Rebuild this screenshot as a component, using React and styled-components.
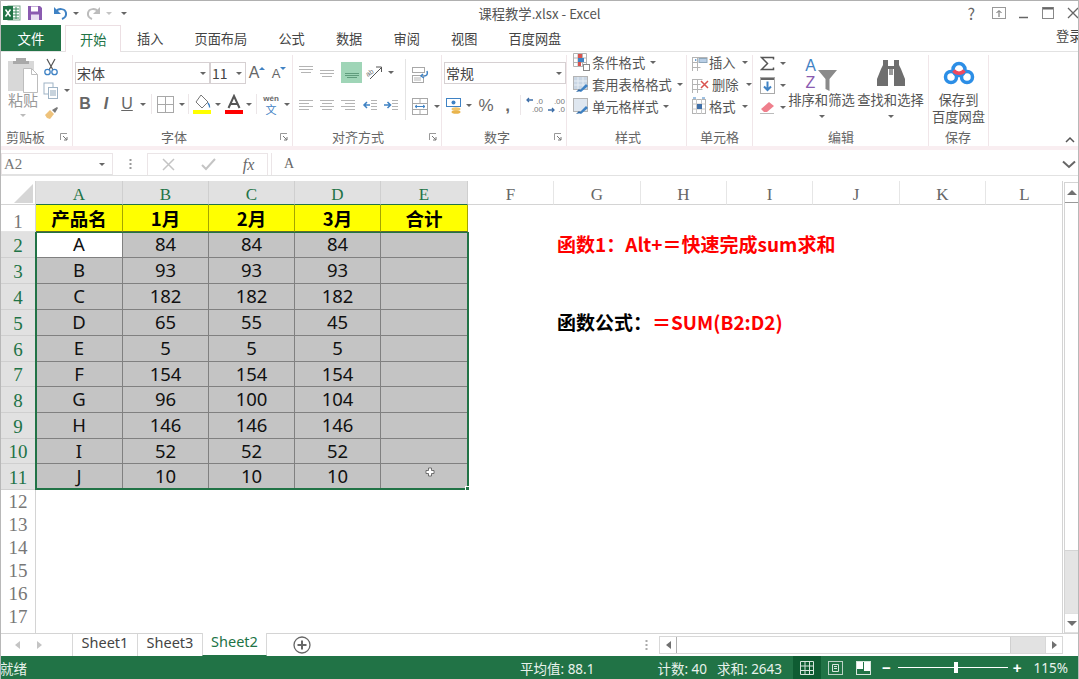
import React from 'react'
import styled, { createGlobalStyle } from 'styled-components'

const GlobalStyle = createGlobalStyle`
  html, body {
    margin: 0;
    padding: 0;
    background: #fff;
    overflow: hidden;
  }
  * { box-sizing: border-box; }
`

const UI_FONT = `"Noto Sans CJK SC", "Noto Sans", sans-serif`
const SERIF = `"Liberation Serif", "Noto Sans CJK SC", serif`
const COLS = '35px 87px 86px 86px 86px 87px 86px 87px 86px 86px 87px 86px 77px'
const GREEN = '#217346'

const Icon = ({ w, h, children }) => (
  <svg width={w} height={h} viewBox={`0 0 ${w} ${h}`} fill="none">{children}</svg>
)

// horizontal text-alignment style icons
const Lines = ({ rows, color = '#b4b4b4' }) => (
  <Icon w={16} h={16}>
    {rows.map(([x1, x2, y], i) => (
      <line key={i} x1={x1} x2={x2} y1={y + 0.5} y2={y + 0.5} stroke={color} />
    ))}
  </Icon>
)

const ExcelLogo = () => (
  <Icon w={19} h={18}>
    <rect x="6" y="2" width="12" height="14" fill="#fff" stroke="#7aa98d" />
    <path d="M11 5h6M11 8h6M11 11h6M11 14h6M14 3v12" stroke="#3b8b5f" />
    <rect x="1" y="2" width="10" height="14" fill={GREEN} />
    <path d="M3.500 5.500l5 7M8.500 5.500l-5 7" stroke="#fff" strokeWidth="1.500" />
  </Icon>
)

const SaveIcon = () => (
  <Icon w={16} h={16}>
    <path d="M1 1h12l2 2v12H1z" fill="#8a5bb0" />
    <rect x="4" y="1.500" width="7" height="5" fill="#fff" />
    <rect x="4" y="9.500" width="8" height="5.500" fill="#e9dff2" />
  </Icon>
)

const UndoIcon = ({ color }) => (
  <Icon w={15} h={16}>
    <path d="M3 7c2-4 9-4 10 1 .5 3-1.500 5-4 6" stroke={color} strokeWidth="2" />
    <path d="M1 2v7h7z" fill={color} />
  </Icon>
)

const RedoIcon = ({ color }) => (
  <Icon w={15} h={16}>
    <path d="M12 7C10 3 3 3 2 8c-.5 3 1.500 5 4 6" stroke={color} strokeWidth="2" />
    <path d="M14 2v7H7z" fill={color} />
  </Icon>
)

const PasteIcon = () => (
  <Icon w={33} h={36}>
    <rect x="1" y="4" width="26" height="30" fill="#d8d8d8" />
    <path d="M9 4V1h10v3h3v3H6V4z" fill="#a9a9a9" />
    <path d="M16.500 11.500h8l6 6v18h-14z" fill="#fff" stroke="#bdbdbd" />
    <path d="M24.500 11.500v6h6" stroke="#bdbdbd" />
  </Icon>
)

const ScissorsIcon = () => (
  <Icon w={16} h={18}>
    <path d="M4 1l6 11M12 1L6 12" stroke="#555" strokeWidth="1.200" />
    <circle cx="4.500" cy="14" r="2.700" stroke="#3f82c4" strokeWidth="1.300" />
    <circle cx="11.500" cy="14" r="2.700" stroke="#3f82c4" strokeWidth="1.300" />
  </Icon>
)

const CopyIcon = () => (
  <Icon w={16} h={17}>
    <rect x="1" y="1" width="9" height="11" fill="#fff" stroke="#9fb4c6" />
    <rect x="5.500" y="5.500" width="9" height="11" fill="#fff" stroke="#9fb4c6" />
    <path d="M7 9h6M7 11h6M7 13h6" stroke="#8fa7bb" />
  </Icon>
)

const BrushIcon = () => (
  <Icon w={15} h={14}>
    <path d="M1 9l5-5 4 4-4 5-3-1z" fill="#eec27b" />
    <path d="M8 4l5-3 1 1-3 5z" fill="#7a7a7a" />
  </Icon>
)

const BorderIcon = () => (
  <Icon w={17} h={17}>
    <rect x="0.500" y="0.500" width="16" height="16" stroke="#a8a8a8" />
    <path d="M8.500 1v15M1 8.500h15" stroke="#a8a8a8" />
  </Icon>
)

const FillIcon = () => (
  <Icon w={18} h={20}>
    <path d="M8 1l7 7-6 6-6-6z" fill="#fff" stroke="#777" />
    <path d="M15 9c1.500 2 2 3 1.500 4.500" stroke="#3f82c4" strokeWidth="1.500" />
    <rect x="0" y="16" width="18" height="4" fill="#ffff00" />
  </Icon>
)

const FontColorIcon = () => (
  <Icon w={18} h={20}>
    <path d="M3.500 14L9 2l5.500 12M5.500 10h7" stroke="#555" strokeWidth="2" />
    <rect x="0" y="16" width="18" height="4" fill="#ff0000" />
  </Icon>
)

const OrientIcon = () => (
  <Icon w={18} h={16}>
    <text x="1" y="11" fontSize="7" fill="#666" fontFamily="Liberation Sans" transform="rotate(-35 5 9)">ab</text>
    <path d="M5 15L16 4M11 3h5.500v5" stroke="#555" />
  </Icon>
)

const IndentIcon = ({ right }) => (
  <Icon w={16} h={12}>
    <path d="M9 1.500h6M9 4.500h6M9 7.500h6M9 10.500h6" stroke="#b4b4b4" />
    {right
      ? <path d="M1 6h6M4.500 3l3 3-3 3" stroke="#3f82c4" strokeWidth="1.500" />
      : <path d="M8 6H2M5 3L2 6l3 3" stroke="#3f82c4" strokeWidth="1.500" />}
  </Icon>
)

const WrapIcon = () => (
  <Icon w={17} h={16}>
    <rect x="0.500" y="0.500" width="12" height="5" stroke="#a8a8a8" />
    <rect x="0.500" y="8.500" width="11" height="7" stroke="#a8a8a8" />
    <path d="M2 11h7M2 13h7" stroke="#b4b4b4" />
    <path d="M15 4c1 3 0 5-3 5M11 7L9 9l3 2" stroke="#3f82c4" strokeWidth="1.500" />
  </Icon>
)

const MergeIcon = () => (
  <Icon w={16} h={17}>
    <rect x="0.500" y="0.500" width="15" height="16" stroke="#a8a8a8" />
    <path d="M1 5.500h14M1 11.500h14M8 1v4M8 12v4" stroke="#a8a8a8" />
    <path d="M3 8.500h10M5 7L3 8.500 5 10M11 7l2 1.500L11 10" stroke="#3f82c4" />
  </Icon>
)

const MoneyIcon = () => (
  <Icon w={17} h={17}>
    <rect x="0.500" y="1.500" width="14" height="8" fill="#fff" stroke="#3f82c4" />
    <circle cx="7.500" cy="5.500" r="2" fill="#3f82c4" />
    <ellipse cx="10" cy="12" rx="4.500" ry="1.800" fill="#f2c66d" />
    <ellipse cx="10" cy="15" rx="4.500" ry="1.800" fill="#e9b44c" />
  </Icon>
)

const DecimalIcon = ({ top, bottom, up }) => (
  <Icon w={20} h={18}>
    <text x="19" y="8" textAnchor="end" fontSize="8" fill="#777" fontFamily="Liberation Sans">{top}</text>
    <text x="19" y="16" textAnchor="end" fontSize="8" fill="#777" fontFamily="Liberation Sans">{bottom}</text>
    {up
      ? <path d="M9 4H3M5 2L3 4l2 2" stroke="#3f6fa8" strokeWidth="1.300" />
      : <path d="M2 14h6M6 12l2 2-2 2" stroke="#3f6fa8" strokeWidth="1.300" />}
  </Icon>
)

const CondIcon = () => (
  <Icon w={17} h={18}>
    <path d="M.5.500h13v13H.5zM5 1v12M9.500 1v12M1 5h12M1 9.500h12" stroke="#b4b4b4" />
    <rect x="5" y="1" width="4" height="4" fill="#d9534f" />
    <rect x="5" y="5" width="6" height="4" fill="#3f82c4" />
    <rect x="5" y="9" width="3" height="4" fill="#d9534f" />
    <rect x="10.500" y="11.500" width="6" height="6" fill="#fff" stroke="#888" />
  </Icon>
)

const TableStyleIcon = ({ plain }) => (
  <Icon w={17} h={17}>
    <rect x="0.500" y="0.500" width="14" height="13" fill={plain ? '#dfe7f0' : '#c9d6e4'} stroke="#b4b4b4" />
    {!plain && <path d="M5 1v12M10 1v12M1 5h13M1 9h13" stroke="#e8eef4" />}
    <path d="M6 15l7-7 2 2-7 6z" fill="#3f82c4" />
    <path d="M3 16l3-3 2 2z" fill="#2f6aa8" />
  </Icon>
)

const CellInsertIcon = () => (
  <Icon w={16} h={17}>
    <path d="M.5 3.500h15M.5 8.500h5M.5 13.500h8M5.500 3v14M.5 3v14" stroke="#b4b4b4" />
    <rect x="7" y="4.500" width="8" height="4" fill="#b9cfe6" stroke="#8fa7bb" />
    <path d="M3 5v2l2-1z" fill="#3f82c4" />
  </Icon>
)

const CellDeleteIcon = () => (
  <Icon w={18} h={17}>
    <path d="M.5 3.500h10M.5 8.500h8M.5 13.500h10M5.500 3v14M.5 3v14" stroke="#b4b4b4" />
    <path d="M9 5l7 7M16 5l-7 7" stroke="#d9534f" strokeWidth="1.500" />
  </Icon>
)

const CellFormatIcon = () => (
  <Icon w={16} h={18}>
    <rect x="0.500" y="2.500" width="13" height="14" stroke="#b4b4b4" />
    <path d="M.5 7h13M.5 12h13M4.500 2v15M9.500 2v15" stroke="#c8c8c8" />
    <rect x="5" y="7" width="5" height="5" fill="#3f6fa8" />
    <path d="M1 1h3M10 1h3" stroke="#3f82c4" />
  </Icon>
)

const SigmaIcon = () => (
  <Icon w={15} h={15}>
    <path d="M13.500 3.500V1.500h-12l6 6-6 6h12v-2" stroke="#555" strokeWidth="1.500" />
  </Icon>
)

const FillDownIcon = () => (
  <Icon w={15} h={17}>
    <rect x="0.500" y="0.500" width="14" height="16" fill="#fff" stroke="#aaa" />
    <rect x="1" y="1" width="13" height="2" fill="#666" />
    <path d="M7.500 4.500v8M4 9.500l3.500 3.500L11 9.500" stroke="#3f82c4" strokeWidth="2" />
  </Icon>
)

const EraserIcon = () => (
  <Icon w={15} h={14}>
    <path d="M1 9l8-7 5 4-7 6H4z" fill="#ef7f8c" />
    <path d="M0 13.500h14" stroke="#bbb" />
  </Icon>
)

const FunnelIcon = () => (
  <Icon w={20} h={22}>
    <path d="M0 1h19l-7.500 9v12l-4-2V10z" fill="#8a8a8a" />
  </Icon>
)

const FindIcon = () => (
  <Icon w={30} h={28}>
    <path d="M7 1h5v6h6V1h5v5l2 4 4 10v7H18V10h-6v17H1v-7l4-10 2-4z" fill="#6e6e6e" />
    <path d="M13 10h4v6h-4z" fill="#9a9a9a" />
  </Icon>
)

const CloudIcon = () => (
  <Icon w={32} h={24}>
    <circle cx="16" cy="8.500" r="6" stroke="#2c8ee6" strokeWidth="3.500" />
    <circle cx="8" cy="16" r="5.500" stroke="#2c8ee6" strokeWidth="3.500" />
    <circle cx="24" cy="16" r="5.500" stroke="#2c8ee6" strokeWidth="3.500" />
    <path d="M10.500 9.500c3 3.500 8 3.500 11 0" stroke="#ef4a5f" strokeWidth="3.500" />
  </Icon>
)

const Launcher = () => (
  <Icon w={8} h={8}>
    <path d="M.5 7V.5H7" stroke="#999" />
    <path d="M3 3l4 4M7 4v3H4" stroke="#777" />
  </Icon>
)

const CursorIcon = () => (
  <Icon w={10} h={10}>
    <path d="M3.500 1h3v2.500H9v3H6.500V9h-3V6.500H1v-3h2.500z" fill="#fff" stroke="#555" strokeWidth=".8" />
  </Icon>
)

const Caret = styled.span`
  display: inline-block;
  flex: none;
  width: 0;
  height: 0;
  margin: ${(p) => p.$margin || '0'};
  border-left: 3px solid transparent;
  border-right: 3px solid transparent;
  border-top: 3px solid ${(p) => p.$color || '#666'};
`

const Window = styled.div`
  width: 1079px;
  height: 679px;
  display: flex;
  flex-direction: column;
  background: #fff;
  color: #444;
  font-family: ${UI_FONT};
  overflow: hidden;
  border-left: 1px solid #b8b8b8;
  border-right: 1px solid #b8b8b8;
`

const TitleBar = styled.div`
  height: 25px;
  flex: none;
  display: grid;
  grid-template-columns: 1fr auto 1fr;
  align-items: center;
  border-top: 1px solid #b0b0b0;
`

const Qat = styled.div`
  display: flex;
  align-items: center;
  padding-left: 1px;
`

const QatSlot = styled.span`
  display: flex;
  align-items: center;
  margin-left: ${(p) => p.$ml || 0}px;
`

const Title = styled.div`
  font-size: 13.300px;
  color: #555;
`

const WinButtons = styled.div`
  display: flex;
  justify-content: flex-end;
  align-items: center;
  gap: 12px;
  color: #666;
`

const Help = styled.span`
  font-size: 16px;
  margin-right: 5px;
`

const TabsBar = styled.div`
  height: 27px;
  flex: none;
  display: flex;
  align-items: stretch;
  border-bottom: 1px solid #e2e2e2;
  font-size: 13.200px;
`

const FileTab = styled.div`
  width: 60px;
  margin-right: 4px;
  background: ${GREEN};
  color: #fff;
  display: flex;
  align-items: center;
  justify-content: center;
  font-size: 13.500px;
`

const Tab = styled.div`
  padding: 0 15.580px;
  display: flex;
  align-items: center;
  color: ${(p) => (p.$active ? GREEN : '#444')};
  background: #fff;
  ${(p) => p.$active && `
    border: 1px solid #ecdfe3;
    border-bottom: none;
    margin-bottom: -1px;
    padding: 0 14px;
  `}
`

const Login = styled.div`
  margin-left: auto;
  margin-right: -8px;
  padding-bottom: 6px;
  display: flex;
  align-items: center;
  width: 30px;
  white-space: nowrap;
  overflow: hidden;
`

const Ribbon = styled.div`
  height: 94px;
  flex: none;
  display: flex;
  font-size: 13.300px;
  color: #555;
  position: relative;
`

const RibbonBand = styled.div`
  height: 4px;
  flex: none;
  background: #f9eef1;
`

const Group = styled.div`
  width: ${(p) => p.$w}px;
  flex: none;
  margin-top: 3px;
  display: flex;
  flex-direction: column;
  border-right: 1px solid #f0e6e9;
`

const GroupBody = styled.div`
  flex: 1;
  min-height: 0;
  display: flex;
  padding-left: ${(p) => p.$pl || 0}px;
`

const GroupFoot = styled.div`
  height: 19px;
  flex: none;
  display: grid;
  grid-template-columns: ${(p) => p.$left}px auto 1fr;
  align-items: center;
  color: #666;
  font-size: 13px;
  line-height: 1;
  padding-right: 4px;
`

const LauncherSlot = styled.span`
  grid-column: 3;
  justify-self: end;
  display: flex;
`

const Stack = styled.div`
  display: flex;
  flex-direction: column;
  width: ${(p) => (p.$w ? `${p.$w}px` : 'auto')};
  flex: none;
  margin-top: ${(p) => p.$mt || 0}px;
  gap: ${(p) => p.$gap || 0}px;
  align-items: ${(p) => p.$align || 'stretch'};
`

const Row = styled.div`
  display: flex;
  align-items: center;
  height: ${(p) => p.$h || 22}px;
  margin-top: ${(p) => p.$mt || 0}px;
`

const Tool = styled.span`
  width: ${(p) => p.$w || 21}px;
  height: 100%;
  flex: none;
  display: flex;
  align-items: center;
  justify-content: center;
  margin-left: ${(p) => p.$ml || 0}px;
`

const Sep = styled.span`
  width: 1px;
  height: 20px;
  flex: none;
  background: #ece6e8;
  margin: 0 ${(p) => p.$m || 2}px;
`

const Glyph = styled.span`
  font-family: "Liberation Sans", sans-serif;
  font-size: ${(p) => p.$size || 16}px;
  font-weight: ${(p) => (p.$bold ? 700 : 400)};
  font-style: ${(p) => (p.$italic ? 'italic' : 'normal')};
  text-decoration: ${(p) => (p.$under ? 'underline' : 'none')};
  line-height: 1;
  color: #666;
`

const GrowMark = styled.span`
  display: flex;
  margin: 0 0 10px 0;
  width: 0;
  height: 0;
  border-left: 3px solid transparent;
  border-right: 3px solid transparent;
  ${(p) => (p.$up ? 'border-bottom' : 'border-top')}: 3px solid #3f82c4;
`

const WenStack = styled.span`
  display: flex;
  flex-direction: column;
  align-items: center;
`

const WenTop = styled.span`
  font-family: "Liberation Sans", sans-serif;
  font-size: 8px;
  font-weight: 700;
  line-height: 9px;
  color: #666;
`

const WenBottom = styled.span`
  font-size: 11px;
  line-height: 12px;
  color: #3f82c4;
`

const SortLetters = styled.span`
  display: flex;
  flex-direction: column;
  align-items: center;
  font-family: "Liberation Sans", sans-serif;
  font-size: 16px;
  line-height: 17px;
  margin-right: 2px;
`

const SortLetter = styled.span`
  color: ${(p) => p.$color};
`

const SelectBox = styled.div`
  width: ${(p) => p.$w}px;
  height: 100%;
  flex: none;
  border: 1px solid #d6d0d2;
  display: flex;
  align-items: center;
  justify-content: space-between;
  padding: 0 3px 0 1px;
  font-size: 14px;
  color: #444;
  background: #fff;
`

const GreenBox = styled.span`
  width: 21px;
  height: 21px;
  flex: none;
  display: flex;
  align-items: center;
  justify-content: center;
  margin-left: 4px;
  background: #9fd5b7;
`

const VDivider = styled.span`
  width: 1px;
  height: 61px;
  flex: none;
  background: #e4e4e4;
  margin-top: 4px;
`

const TextRow = styled.div`
  display: flex;
  align-items: center;
  height: 22px;
  white-space: nowrap;
  gap: ${(p) => p.$gap || 2}px;
`

const BigButton = styled.div`
  width: ${(p) => p.$w}px;
  flex: none;
  display: flex;
  flex-direction: column;
  align-items: center;
  line-height: 17px;
  white-space: nowrap;
`

const IconSlot = styled.div`
  height: 36px;
  display: flex;
  align-items: ${(p) => p.$align || 'flex-start'};
  justify-content: center;
`

const PasteLabel = styled.div`
  color: #999;
  font-size: 15px;
  line-height: 20px;
  margin-top: -3px;
`

const RibbonCollapse = styled.div`
  position: absolute;
  right: 3px;
  bottom: 3px;
  display: flex;
`

const FormulaBar = styled.div`
  height: 26px;
  flex: none;
  display: flex;
  align-items: stretch;
  padding-top: 3px;
  border-bottom: 1px solid #e2e2e2;
  margin-bottom: 5px;
  font-family: ${SERIF};
`

const NameBox = styled.div`
  width: 112px;
  flex: none;
  border: 1px solid #ebe5e7;
  border-bottom-color: #e2e2e2;
  display: flex;
  align-items: center;
  justify-content: space-between;
  padding: 0 7px 0 2px;
  color: #777;
  font-size: 15px;
`

const Grip = styled.div`
  width: 34px;
  flex: none;
  display: flex;
  align-items: center;
  justify-content: center;
`

const FxBox = styled.div`
  width: 121px;
  flex: none;
  border: 1px solid #ebe5e7;
  border-bottom: none;
  display: grid;
  grid-template-columns: 40px 41px 39px;
  align-items: center;
  justify-items: center;
  color: #666;
  font-size: 16px;
  font-style: italic;
`

const FormulaInput = styled.div`
  flex: 1;
  margin-left: 3px;
  border-left: 1px solid #ebe5e7;
  display: flex;
  align-items: center;
  justify-content: space-between;
  padding: 0 2px 0 12px;
  color: #666;
  font-size: 14px;
`

const Main = styled.div`
  flex: 1;
  min-height: 0;
  display: flex;
`

const Sheet = styled.div`
  width: 1062px;
  flex: none;
  position: relative;
  overflow: hidden;
  border-right: 1px solid #d4d4d4;
`

const SheetRow = styled.div`
  display: grid;
  grid-template-columns: ${COLS};
  height: ${(p) => p.$h}px;
`

const Corner = styled.div`
  border-right: 1px solid #d4d4d4;
  border-bottom: 1px solid #d4d4d4;
  display: flex;
  align-items: flex-end;
  justify-content: flex-end;
  padding: 0 2px 1px 0;
`

const ColHead = styled.div`
  display: flex;
  align-items: center;
  justify-content: center;
  padding-top: 3px;
  font-family: ${SERIF};
  font-size: 17px;
  line-height: 1;
  background: ${(p) => (p.$sel ? '#e1e1e1' : '#fff')};
  color: ${(p) => (p.$sel ? GREEN : '#666')};
  border-right: 1px solid ${(p) => (p.$sel ? '#cfcfcf' : '#e6e6e6')};
  border-bottom: 1px solid ${(p) => (p.$sel ? GREEN : '#d4d4d4')};
  &:last-child { border-right: none; }
`

const RowHead = styled.div`
  display: flex;
  align-items: flex-end;
  justify-content: center;
  font-family: ${SERIF};
  font-size: 19px;
  line-height: ${(p) => p.$lh || 23}px;
  background: ${(p) => (p.$sel ? '#e1e1e1' : '#fff')};
  color: ${(p) => (p.$sel ? GREEN : '#777')};
  border-right: 1px solid ${(p) => (p.$sel ? GREEN : '#d4d4d4')};
  border-bottom: 1px solid ${(p) => (p.$sel ? '#cfcfcf' : '#e4e4e4')};
`

const HeadCell = styled.div`
  display: flex;
  align-items: center;
  justify-content: center;
  background: #ffff00;
  color: #000;
  font-weight: 700;
  font-size: 18.500px;
  line-height: 1;
  border-right: 1px solid #a5a500;
  border-bottom: 1px solid #5f6b2c;
`

const DataCell = styled.div`
  display: flex;
  align-items: center;
  justify-content: center;
  position: relative;
  background: ${(p) => (p.$active ? '#fff' : '#c4c4c4')};
  color: #111;
  font-family: "Noto Sans", "Noto Sans CJK SC", sans-serif;
  font-size: 18.500px;
  line-height: 1;
  border-right: 1px solid #808080;
  border-bottom: 1px solid #808080;
`

const Note = styled.div`
  grid-column: 8 / span 4;
  display: flex;
  align-items: center;
  padding: 0 0 4px 3px;
  white-space: nowrap;
  font-weight: 700;
  font-size: 19px;
  line-height: 1;
  color: ${(p) => p.$color || '#ff0000'};
`

const NoteRed = styled.span`
  color: #ff0000;
`

const Selection = styled.div`
  position: absolute;
  left: 34px;
  top: 51px;
  width: 434px;
  height: 258px;
  border: 2px solid ${GREEN};
  border-top-width: 1px;
  pointer-events: none;
`

const FillHandle = styled.span`
  position: absolute;
  right: -3px;
  bottom: -3px;
  width: 5px;
  height: 5px;
  background: ${GREEN};
  border: 1px solid #fff;
`

const Pointer = styled.span`
  position: absolute;
  left: 44px;
  top: 3px;
  display: flex;
`

const VScroll = styled.div`
  flex: 1;
  margin: 1px 0 0 1px;
  display: flex;
  flex-direction: column;
  border-left: 1px solid #d4d4d4;
`

const ScrollBtn = styled.div`
  height: ${(p) => p.$h || 20}px;
  flex: none;
  display: flex;
  align-items: center;
  justify-content: center;
  border-top: 1px solid ${(p) => (p.$top ? '#d4d4d4' : '#e0e0e0')};
  border-bottom: 1px solid ${(p) => (p.$top ? '#999' : '#e0e0e0')};
`

const Triangle = styled.span`
  width: 0;
  height: 0;
  border-left: 5px solid transparent;
  border-right: 5px solid transparent;
  ${(p) => (p.$up ? 'border-bottom' : 'border-top')}: 5px solid #707070;
`

const VThumb = styled.div`
  height: 348px;
  flex: none;
  background: #fff;
  border-bottom: 1px solid #d4d4d4;
`

const VTrack = styled.div`
  flex: 1;
  background: #e4e4e4;
`

const SheetTabsBar = styled.div`
  height: 23px;
  flex: none;
  display: flex;
  align-items: stretch;
  border-top: 1px solid #d4d4d4;
`

const TabNav = styled.div`
  width: 72px;
  flex: none;
  display: flex;
  align-items: center;
  gap: 17px;
  padding-left: 14px;
  border-right: 1px solid #d8d8d8;
`

const HTriangle = styled.span`
  width: 0;
  height: 0;
  flex: none;
  border-top: 4px solid transparent;
  border-bottom: 4px solid transparent;
  ${(p) => (p.$left ? 'border-right' : 'border-left')}: 5px solid ${(p) => p.$color || '#c4c4c4'};
`

const SheetTab = styled.div`
  width: 65px;
  flex: none;
  display: flex;
  align-items: center;
  justify-content: center;
  padding-bottom: 6px;
  font-family: "Noto Sans", sans-serif;
  font-size: 14.500px;
  line-height: 1;
  color: ${(p) => (p.$active ? GREEN : '#444')};
  border-right: 1px solid #d8d8d8;
  ${(p) => p.$active && `border-bottom: 1px solid ${GREEN}; margin-top: -1px; background: #fff; border-left: 1px solid #d8d8d8; margin-left: -1px;`}
`

const AddSheet = styled.div`
  margin-left: 26px;
  display: flex;
  align-items: center;
`

const Splitter = styled.div`
  margin-left: auto;
  width: 26px;
  display: flex;
  align-items: center;
  justify-content: center;
`

const HScroll = styled.div`
  width: 404px;
  flex: none;
  margin: 2px 15px 2px 0;
  display: flex;
  border: 1px solid #d8d8d8;
`

const HArrow = styled.div`
  width: 17px;
  flex: none;
  display: flex;
  align-items: center;
  justify-content: center;
  border-left: ${(p) => (p.$right ? '1px solid #d8d8d8' : 'none')};
  border-right: ${(p) => (p.$right ? 'none' : '1px solid #b0b0b0')};
`

const HThumb = styled.div`
  width: 334px;
  flex: none;
  border-right: 1px solid #d0d0d0;
`

const HTrack = styled.div`
  flex: 1;
  background: #e2e2e2;
`

const StatusBar = styled.div`
  height: 23px;
  flex: none;
  margin: 0 -1px;
  display: flex;
  align-items: center;
  background: ${GREEN};
  color: #e8f2ec;
  font-size: 13.500px;
`

const StatusText = styled.span`
  margin-left: ${(p) => p.$ml || 0}px;
  white-space: nowrap;
  font-family: "Noto Sans", "Noto Sans CJK SC", sans-serif;
`

const ViewBtn = styled.span`
  width: 28px;
  height: 100%;
  flex: none;
  display: flex;
  align-items: center;
  justify-content: center;
  background: ${(p) => (p.$active ? '#0f5c32' : 'transparent')};
`

const ZoomSlider = styled.div`
  width: 110px;
  height: 100%;
  flex: none;
  margin: 0 5px 0 7px;
  display: flex;
  align-items: center;
  position: relative;
`

const ZoomLine = styled.span`
  width: 100%;
  height: 1px;
  background: #fff;
`

const ZoomThumb = styled.span`
  position: absolute;
  left: 56px;
  top: 6px;
  width: 4px;
  height: 11px;
  background: #fff;
`

const ZoomSign = styled.span`
  color: #fff;
  font-family: "Liberation Sans", sans-serif;
  font-weight: 700;
  font-size: 15px;
  line-height: 1;
`

const COL_LETTERS = 'ABCDEFGHIJKL'.split('')
const ROW_H = [26, 26, 26, 26, 26, 25, 26, 26, 25, 26]
const DATA = [
  ['A', 84, 84, 84],
  ['B', 93, 93, 93],
  ['C', 182, 182, 182],
  ['D', 65, 55, 45],
  ['E', 5, 5, 5],
  ['F', 154, 154, 154],
  ['G', 96, 100, 104],
  ['H', 146, 146, 146],
  ['I', 52, 52, 52],
  ['J', 10, 10, 10],
]
const NOTES = {
  2: <Note>函数1：Alt+＝快速完成sum求和</Note>,
  5: <Note $color="#000">函数公式：<NoteRed>＝SUM(B2:D2)</NoteRed></Note>,
}

const App = () => {
  return (
    <Window>
      <GlobalStyle />
      <TitleBar>
        <Qat>
          <ExcelLogo />
          <QatSlot $ml={6}><SaveIcon /></QatSlot>
          <QatSlot $ml={10}><UndoIcon color="#3f82c4" /></QatSlot>
          <Caret $margin="0 0 0 5px" />
          <QatSlot $ml={7}><RedoIcon color="#bcbcbc" /></QatSlot>
          <Caret $margin="0 0 0 5px" $color="#c4c4c4" />
          <QatSlot $ml={9}><Caret /></QatSlot>
        </Qat>
        <Title>课程教学.xlsx - Excel</Title>
        <WinButtons>
          <Help>?</Help>
          <Icon w={14} h={12}>
            <rect x="0.500" y="0.500" width="13" height="11" stroke="#999" />
            <path d="M7 10V4M4.500 6L7 3.500 9.500 6" stroke="#666" />
          </Icon>
          <Icon w={12} h={12}><path d="M1 10.500h9" stroke="#666" strokeWidth="1.500" /></Icon>
          <Icon w={13} h={13}>
            <rect x="0.500" y="0.500" width="11" height="11" stroke="#888" />
            <path d="M1 1.500h10" stroke="#666" strokeWidth="2" />
          </Icon>
          <Icon w={11} h={12}><path d="M1 1l10 10M11 1L1 11" stroke="#666" strokeWidth="1.300" /></Icon>
        </WinButtons>
      </TitleBar>

      <TabsBar>
        <FileTab>文件</FileTab>
        <Tab $active>开始</Tab>
        <Tab>插入</Tab>
        <Tab>页面布局</Tab>
        <Tab>公式</Tab>
        <Tab>数据</Tab>
        <Tab>审阅</Tab>
        <Tab>视图</Tab>
        <Tab>百度网盘</Tab>
        <Login>登录</Login>
      </TabsBar>

      <Ribbon>
        <Group $w={72}>
          <GroupBody $pl={4}>
            <Stack $w={36} $mt={2} $align="center">
              <PasteIcon />
              <PasteLabel>粘贴</PasteLabel>
              <Caret $margin="4px 0 0 0" $color="#bbb" />
            </Stack>
            <Stack $w={30} $mt={3} $gap={5}>
              <Row $h={18}><Tool $w={20}><ScissorsIcon /></Tool></Row>
              <Row $h={18}>
                <Tool $w={20}><CopyIcon /></Tool>
                <Caret $margin="0 0 0 3px" />
              </Row>
              <Row $h={18}><Tool $w={20}><BrushIcon /></Tool></Row>
            </Stack>
          </GroupBody>
          <GroupFoot $left={5}>
            <span />
            <span>剪贴板</span>
            <LauncherSlot><Launcher /></LauncherSlot>
          </GroupFoot>
        </Group>

        <Group $w={220}>
          <GroupBody $pl={2}>
            <Stack $mt={7}>
              <Row>
                <SelectBox $w={135}>宋体<Caret /></SelectBox>
                <SelectBox $w={36}>11<Caret /></SelectBox>
                <Tool $w={22}><Glyph $size={16}>A</Glyph><GrowMark $up /></Tool>
                <Tool $w={22}><Glyph $size={13}>A</Glyph><GrowMark /></Tool>
              </Row>
              <Row $mt={9}>
                <Tool $w={20}><Glyph $bold>B</Glyph></Tool>
                <Tool $w={22}><Glyph $italic $bold>I</Glyph></Tool>
                <Tool $w={20}><Glyph $under>U</Glyph></Tool>
                <Tool $w={12}><Caret /></Tool>
                <Sep $m={2} />
                <Tool $w={23}><BorderIcon /></Tool>
                <Tool $w={9}><Caret /></Tool>
                <Sep $m={2} />
                <Tool $w={22}><FillIcon /></Tool>
                <Tool $w={10}><Caret /></Tool>
                <Tool $w={21}><FontColorIcon /></Tool>
                <Tool $w={9}><Caret /></Tool>
                <Sep $m={3} />
                <Tool $w={22}>
                  <WenStack>
                    <WenTop>wén</WenTop>
                    <WenBottom>文</WenBottom>
                  </WenStack>
                </Tool>
                <Tool $w={9}><Caret /></Tool>
              </Row>
            </Stack>
          </GroupBody>
          <GroupFoot $left={88}>
            <span />
            <span>字体</span>
            <LauncherSlot><Launcher /></LauncherSlot>
          </GroupFoot>
        </Group>

        <Group $w={149}>
          <GroupBody>
            <Stack $w={112} $mt={6}>
              <Row>
                <Tool $w={21} $ml={2}><Lines rows={[[1, 15, 2], [1, 15, 5], [3, 13, 8]]} /></Tool>
                <Tool $w={21}><Lines rows={[[1, 15, 6], [1, 15, 9], [3, 13, 12]]} /></Tool>
                <GreenBox><Lines color="#5f9c7c" rows={[[1, 15, 9], [1, 15, 11], [3, 13, 13]]} /></GreenBox>
                <Tool $w={24}><OrientIcon /></Tool>
                <Tool $w={10}><Caret /></Tool>
              </Row>
              <Row $mt={11}>
                <Tool $w={21} $ml={2}><Lines rows={[[1, 15, 3], [1, 11, 6], [1, 15, 9], [1, 11, 12]]} /></Tool>
                <Tool $w={21}><Lines rows={[[1, 15, 3], [3, 13, 6], [1, 15, 9], [3, 13, 12]]} /></Tool>
                <Tool $w={21}><Lines rows={[[1, 15, 3], [5, 15, 6], [1, 15, 9], [5, 15, 12]]} /></Tool>
                <Tool $w={23}><IndentIcon /></Tool>
                <Tool $w={19}><IndentIcon right /></Tool>
              </Row>
            </Stack>
            <VDivider />
            <Stack $w={36} $mt={11} $gap={15}>
              <Row $h={17}><Tool $w={28}><WrapIcon /></Tool></Row>
              <Row $h={17}>
                <Tool $w={28}><MergeIcon /></Tool>
                <Caret />
              </Row>
            </Stack>
          </GroupBody>
          <GroupFoot $left={39}>
            <span />
            <span>对齐方式</span>
            <LauncherSlot><Launcher /></LauncherSlot>
          </GroupFoot>
        </Group>

        <Group $w={125}>
          <GroupBody $pl={2}>
            <Stack $mt={7}>
              <Row>
                <SelectBox $w={122}>常规<Caret /></SelectBox>
              </Row>
              <Row $mt={10}>
                <Tool $w={20}><MoneyIcon /></Tool>
                <Tool $w={10}><Caret /></Tool>
                <Tool $w={24}><Glyph $size={17}>%</Glyph></Tool>
                <Tool $w={19}><Glyph $bold $size={17}>,</Glyph></Tool>
                <Sep $m={3} />
                <Tool $w={20}><DecimalIcon top=".0" bottom=".00" up /></Tool>
                <Tool $w={24}><DecimalIcon top=".00" bottom=".0" /></Tool>
              </Row>
            </Stack>
          </GroupBody>
          <GroupFoot $left={42}>
            <span />
            <span>数字</span>
            <LauncherSlot><Launcher /></LauncherSlot>
          </GroupFoot>
        </Group>

        <Group $w={120}>
          <GroupBody $pl={6}>
            <Stack $mt={-4}>
              <TextRow><CondIcon />条件格式<Caret $margin="0 0 0 3px" /></TextRow>
              <TextRow><TableStyleIcon />套用表格格式<Caret $margin="0 0 0 3px" /></TextRow>
              <TextRow><TableStyleIcon plain />单元格样式<Caret $margin="0 0 0 3px" /></TextRow>
            </Stack>
          </GroupBody>
          <GroupFoot $left={48}>
            <span />
            <span>样式</span>
          </GroupFoot>
        </Group>

        <Group $w={66}>
          <GroupBody $pl={5}>
            <Stack $mt={-4}>
              <TextRow $gap={1}><CellInsertIcon />插入<Caret $margin="0 0 0 5px" /></TextRow>
              <TextRow $gap={0}><CellDeleteIcon />删除<Caret $margin="0 0 0 5px" /></TextRow>
              <TextRow $gap={1}><CellFormatIcon />格式<Caret $margin="0 0 0 5px" /></TextRow>
            </Stack>
          </GroupBody>
          <GroupFoot $left={13}>
            <span />
            <span>单元格</span>
          </GroupFoot>
        </Group>

        <Group $w={176}>
          <GroupBody $pl={7}>
            <Stack $w={27} $mt={-3}>
              <TextRow $gap={5}><SigmaIcon /><Caret /></TextRow>
              <TextRow $gap={5}><FillDownIcon /><Caret /></TextRow>
              <TextRow $gap={5}><EraserIcon /><Caret /></TextRow>
            </Stack>
            <BigButton $w={69}>
              <IconSlot $align="flex-end">
                <SortLetters>
                  <SortLetter $color="#3f82c4">A</SortLetter>
                  <SortLetter $color="#8a5bb0">Z</SortLetter>
                </SortLetters>
                <FunnelIcon />
              </IconSlot>
              <span>排序和筛选</span>
              <Caret $margin="7px 0 0 0" />
            </BigButton>
            <BigButton $w={69}>
              <IconSlot $align="center"><FindIcon /></IconSlot>
              <span>查找和选择</span>
              <Caret $margin="7px 0 0 0" />
            </BigButton>
          </GroupBody>
          <GroupFoot $left={75}>
            <span />
            <span>编辑</span>
          </GroupFoot>
        </Group>

        <Group $w={60}>
          <GroupBody>
            <BigButton $w={59}>
              <IconSlot $align="center"><CloudIcon /></IconSlot>
              <span>保存到</span>
              <span>百度网盘</span>
            </BigButton>
          </GroupBody>
          <GroupFoot $left={16}>
            <span />
            <span>保存</span>
          </GroupFoot>
        </Group>

        <RibbonCollapse>
          <Icon w={10} h={7}><path d="M1 6l4-4 4 4" stroke="#555" strokeWidth="1.500" /></Icon>
        </RibbonCollapse>
      </Ribbon>
      <RibbonBand />

      <FormulaBar>
        <NameBox>A2<Caret /></NameBox>
        <Grip>
          <Icon w={3} h={12}><path d="M1.500 1v2M1.500 5v2M1.500 9v2" stroke="#999" strokeWidth="2" /></Icon>
        </Grip>
        <FxBox>
          <Icon w={13} h={13}><path d="M1 1l11 11M12 1L1 12" stroke="#c4c4c4" strokeWidth="1.500" /></Icon>
          <Icon w={15} h={13}><path d="M1 7l4 4 9-10" stroke="#c4c4c4" strokeWidth="2" /></Icon>
          <span>fx</span>
        </FxBox>
        <FormulaInput>
          A
          <Icon w={14} h={9}><path d="M1 1.500l6 5.500 6-5.500" stroke="#666" strokeWidth="2" /></Icon>
        </FormulaInput>
      </FormulaBar>

      <Main>
        <Sheet>
          <SheetRow $h={24}>
            <Corner>
              <Icon w={19} h={19}><path d="M19 0v19H0z" fill="#d6d6d6" /></Icon>
            </Corner>
            {COL_LETTERS.map((c, i) => <ColHead key={c} $sel={i < 5}>{c}</ColHead>)}
          </SheetRow>
          <SheetRow $h={27}>
            <RowHead $lh={19}>1</RowHead>
            <HeadCell>产品名</HeadCell>
            <HeadCell>1月</HeadCell>
            <HeadCell>2月</HeadCell>
            <HeadCell>3月</HeadCell>
            <HeadCell>合计</HeadCell>
          </SheetRow>
          {DATA.map((row, i) => (
            <SheetRow key={row[0]} $h={ROW_H[i]}>
              <RowHead $sel>{i + 2}</RowHead>
              {row.map((v, j) => <DataCell key={j} $active={i === 0 && j === 0}>{v}</DataCell>)}
              <DataCell>
                {i === 9 && <Pointer><CursorIcon /></Pointer>}
              </DataCell>
              {NOTES[i + 2]}
            </SheetRow>
          ))}
          {[12, 13, 14, 15, 16, 17, 18].map((n) => (
            <SheetRow key={n} $h={23}>
              <RowHead>{n}</RowHead>
            </SheetRow>
          ))}
          <Selection><FillHandle /></Selection>
        </Sheet>
        <VScroll>
          <ScrollBtn $top $h={21}><Triangle $up /></ScrollBtn>
          <VThumb />
          <VTrack />
          <ScrollBtn><Triangle /></ScrollBtn>
        </VScroll>
      </Main>

      <SheetTabsBar>
        <TabNav>
          <HTriangle $left />
          <HTriangle />
        </TabNav>
        <SheetTab>Sheet1</SheetTab>
        <SheetTab>Sheet3</SheetTab>
        <SheetTab $active>Sheet2</SheetTab>
        <AddSheet>
          <Icon w={18} h={18}>
            <circle cx="9" cy="9" r="8" stroke="#666" strokeWidth="1.300" />
            <path d="M9 4.500v9M4.500 9h9" stroke="#666" strokeWidth="2" />
          </Icon>
        </AddSheet>
        <Splitter>
          <Icon w={3} h={10}><path d="M1.500 0v2M1.500 4v2M1.500 8v2" stroke="#aaa" strokeWidth="2" /></Icon>
        </Splitter>
        <HScroll>
          <HArrow><HTriangle $left $color="#707070" /></HArrow>
          <HThumb />
          <HTrack />
          <HArrow $right><HTriangle $color="#707070" /></HArrow>
        </HScroll>
      </SheetTabsBar>

      <StatusBar>
        <StatusText>就绪</StatusText>
        <StatusText $ml={493}>平均值: 88.1</StatusText>
        <StatusText $ml={63}>计数: 40</StatusText>
        <StatusText $ml={10}>求和: 2643</StatusText>
        <StatusText $ml={11} />
        <ViewBtn $active>
          <Icon w={14} h={14}>
            <path d="M.5.500h13v13H.5zM5 1v12M9.500 1v12M1 5h12M1 9.500h12" stroke="#d7e6dd" />
          </Icon>
        </ViewBtn>
        <ViewBtn>
          <Icon w={15} h={14}>
            <rect x="0.500" y="0.500" width="14" height="13" stroke="#bcd3c6" />
            <path d="M4.500 3.500h6v7h-6zM6 5.500h3M6 7.500h3" stroke="#d7e6dd" />
          </Icon>
        </ViewBtn>
        <ViewBtn>
          <Icon w={15} h={14}>
            <rect x="0.500" y="0.500" width="14" height="13" stroke="#d7e6dd" />
            <path d="M1 1h6v7H1zM8 1h6v9H8z" fill="#fff" />
          </Icon>
        </ViewBtn>
        <StatusText $ml={5} />
        <ZoomSign>−</ZoomSign>
        <ZoomSlider><ZoomLine /><ZoomThumb /></ZoomSlider>
        <ZoomSign>+</ZoomSign>
        <StatusText $ml={12}>115%</StatusText>
      </StatusBar>
    </Window>
  )
}

export default App
